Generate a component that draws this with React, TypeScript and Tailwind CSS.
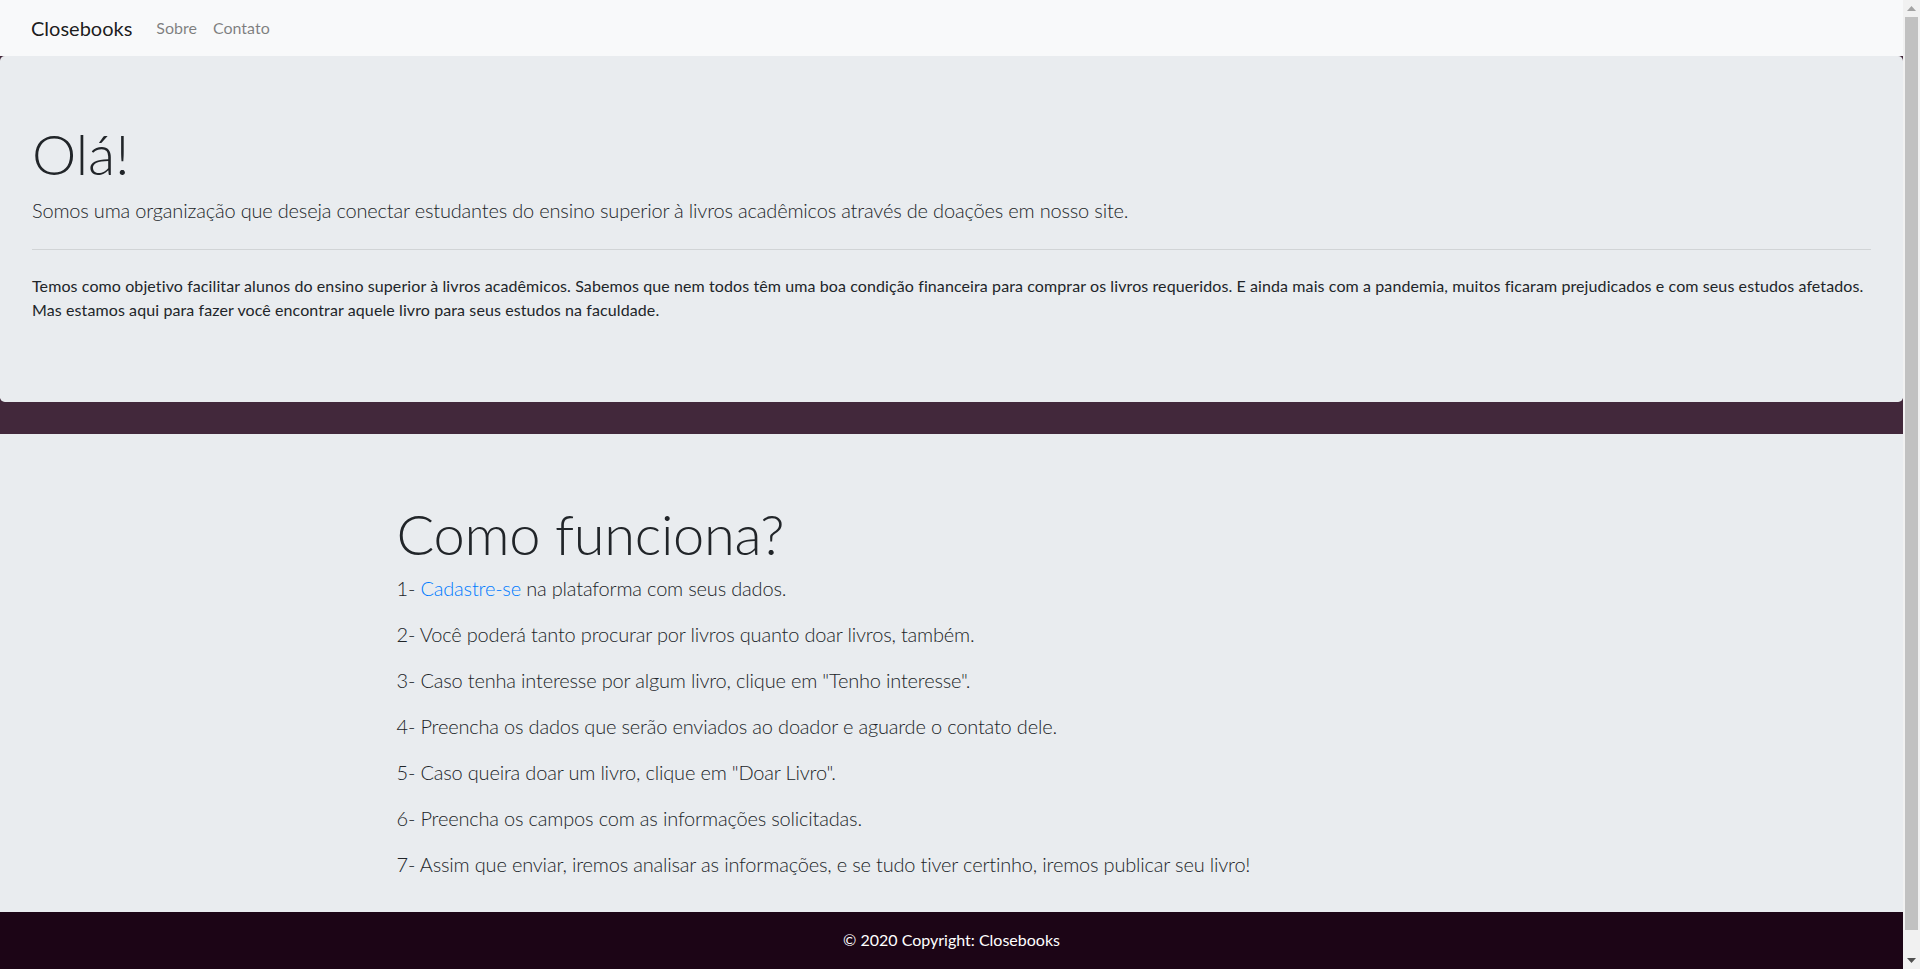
import React from 'react';

const steps: React.ReactNode[] = [
  <>
    1- <a href="#" className="text-[#007bff]">Cadastre-se</a> na plataforma com seus dados.
  </>,
  '2- Você poderá tanto procurar por livros quanto doar livros, também.',
  '3- Caso tenha interesse por algum livro, clique em "Tenho interesse".',
  '4- Preencha os dados que serão enviados ao doador e aguarde o contato dele.',
  '5- Caso queira doar um livro, clique em "Doar Livro".',
  '6- Preencha os campos com as informações solicitadas.',
  '7- Assim que enviar, iremos analisar as informações, e se tudo tiver certinho, iremos publicar seu livro!',
];

function Scrollbar() {
  return (
    <div className="w-[17px] shrink-0 bg-[#f1f1f1] flex flex-col">
      <div className="h-[17px] flex items-center justify-center">
        <svg width="9" height="5" viewBox="0 0 9 5"><path d="M4.5 0L9 5H0z" fill="#a3a3a3" /></svg>
      </div>
      <div className="flex-1 px-[2px] pb-[22px]">
        <div className="h-full bg-[#c1c1c1]" />
      </div>
      <div className="h-[17px] flex items-center justify-center">
        <svg width="9" height="5" viewBox="0 0 9 5"><path d="M0 0H9L4.5 5z" fill="#505050" /></svg>
      </div>
    </div>
  );
}

export default function App() {
  return (
    <div className="flex h-screen overflow-hidden bg-[#42283b] font-['Lato','Open_Sans',sans-serif] text-[#212529]">
      <div className="flex-1 min-w-0">
        {/* Navbar */}
        <nav className="h-14 bg-[#f8f9fa] flex items-center px-[31px]">
          <a href="#" className="text-xl text-black/90 mr-4">Closebooks</a>
          <a href="#" className="px-2 text-base text-black/50">Sobre</a>
          <a href="#" className="px-2 text-base text-black/50">Contato</a>
        </nav>

        {/* Jumbotron */}
        <section className="bg-[#e9ecef] rounded-[4.8px] px-8 py-16 mb-8">
          <h1 className="text-[56px] font-light leading-[1.2] mb-2">Olá!</h1>
          <p className="text-xl font-light leading-[30px] tracking-[-0.18px]">
            Somos uma organização que deseja conectar estudantes do ensino superior à livros acadêmicos através de doações em nosso site.
          </p>
          <hr className="my-6 border-black/10" />
          <p className="text-base leading-6 mb-4 tracking-[0.1px]">
            Temos como objetivo facilitar alunos do ensino superior à livros acadêmicos. Sabemos que nem todos têm uma boa condição financeira para comprar os livros requeridos. E ainda mais com a pandemia, muitos ficaram prejudicados e com seus estudos afetados. Mas estamos aqui para fazer você encontrar aquele livro para seus estudos na faculdade.
          </p>
        </section>

        {/* Como funciona */}
        <section className="bg-[#e9ecef] pt-[66px] pb-[17px]">
          <div className="w-[1140px] mx-auto px-[15px]">
            <h1 className="text-[56px] font-light leading-[1.2] mb-[6px] tracking-[-0.3px]">Como funciona?</h1>
            {steps.map((s, i) => (
              <p key={i} className="text-xl font-light leading-[30px] mb-4 tracking-[-0.18px]">{s}</p>
            ))}
          </div>
        </section>

        {/* Footer */}
        <footer className="bg-[#1c0516] text-white text-center pt-4 pb-8">
          <p className="text-base leading-6">© 2020 Copyright: Closebooks</p>
        </footer>
      </div>
      <Scrollbar />
    </div>
  );
}
